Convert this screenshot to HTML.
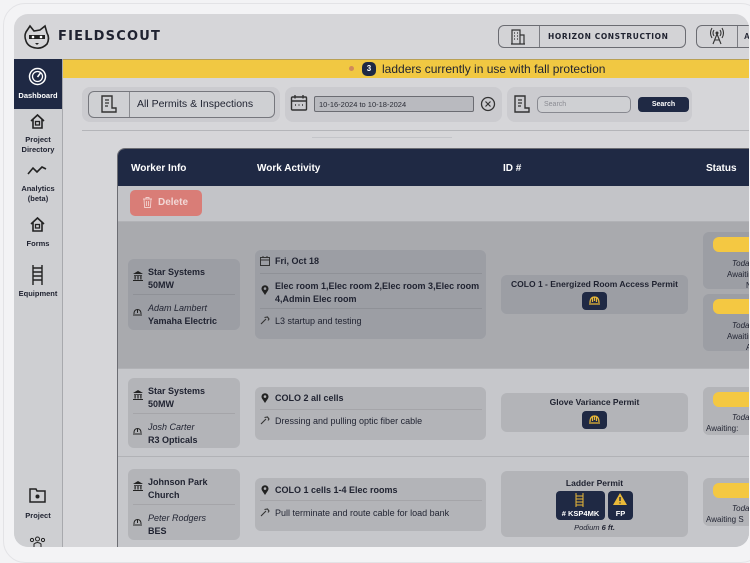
<!DOCTYPE html>
<html><head><meta charset="utf-8"><style>
*{box-sizing:border-box;margin:0;padding:0}
body{width:750px;height:548px;overflow:hidden;background:#f3f3f5;font-family:"Liberation Sans",sans-serif;color:#1f2230;position:relative}
.a{position:absolute}
.b{font-weight:bold}
#clip{position:absolute;left:0;top:0;width:750px;height:548px;clip-path:inset(14px 1px 1px 14px round 14px);overflow:hidden}
.frame{left:14px;top:14px;width:760px;height:560px;background:#d6d6d9}
.card{position:absolute;border-radius:6px}
.sep{border-top:1px solid rgba(0,0,0,.08)}
.t{font-size:9px;font-weight:bold}
.navbtn{background:#1f2944;border-radius:4px}
.yel{background:#f4c842;border-radius:6px}
</style></head><body>
<div class="a" style="left:3px;top:3px;width:760px;height:560px;border:1.5px solid #e3e3e6;border-radius:22px"></div>
<div id="clip">
<div class="a frame"></div>
<svg class="a" style="left:22px;top:24px" width="30" height="26" viewBox="0 0 30 26"><path d="M4 8 L8 2 L12 7 L18 6 L23 2 L25 9 Q28 14 25 20 Q20 25 14 24 Q6 23 4 17 Q2 12 4 8Z" fill="#d6d6d9" stroke="#222" stroke-width="1.6"/><rect x="7" y="11" width="16" height="4" fill="#222"/><circle cx="11" cy="13" r="1.3" fill="#fff"/><circle cx="19" cy="13" r="1.3" fill="#fff"/><path d="M13 19 L17 19 L15 21Z" fill="#222"/></svg>
<div class="a b" style="left:58px;top:29px;font-size:13px;letter-spacing:1.2px;font-family:'DejaVu Sans',sans-serif;font-weight:bold">FIELDSCOUT</div>
<div class="a" style="left:498px;top:25px;width:188px;height:23px;border:1.5px solid #6b6c72;border-radius:6px;background:#d3d3d6"></div>
<div class="a" style="left:539px;top:26px;width:1px;height:21px;background:#7b7c82"></div>
<svg class="a" style="left:510px;top:28px" width="16" height="17" viewBox="0 0 16 17"><path d="M2 16V2H10V16M10 7H14V16M1 16H15M4 5h1M7 5h1M4 8h1M7 8h1M4 11h1M7 11h1" stroke="#333" stroke-width="1.2" fill="none"/></svg>
<div class="a b" style="left:548px;top:32px;font-size:7.5px;letter-spacing:0.6px;font-family:'DejaVu Sans',sans-serif">HORIZON CONSTRUCTION</div>
<div class="a" style="left:696px;top:25px;width:70px;height:23px;border:1.5px solid #6b6c72;border-radius:6px;background:#d3d3d6"></div>
<div class="a" style="left:737px;top:26px;width:1px;height:21px;background:#7b7c82"></div>
<svg class="a" style="left:708px;top:27px" width="18" height="18" viewBox="0 0 18 18"><circle cx="9" cy="6" r="1.5" fill="#333"/><path d="M6 3Q4 6 6 9M12 3Q14 6 12 9M4 1Q1 6 4 11M14 1Q17 6 14 11M9 7L5 17M9 7L13 17M6.5 13H11.5" stroke="#333" stroke-width="1.1" fill="none"/></svg>
<div class="a b" style="left:744px;top:32px;font-size:8px">A</div>
<div class="a" style="left:63px;top:59px;width:700px;height:19px;background:#f1c842;border-top:1px solid #b9a054"></div>
<div class="a" style="left:349px;top:66px;width:5px;height:5px;border-radius:50%;background:#d08a5a"></div>
<div class="a" style="left:362px;top:62px;width:14px;height:14px;border-radius:5px;background:#1f2944;color:#fff;font-size:8px;font-weight:bold;text-align:center;line-height:14px">3</div>
<div class="a" style="left:382px;top:62px;font-size:12px;font-weight:500">ladders currently in use with fall protection</div>
<div class="a" style="left:14px;top:59px;width:49px;height:500px;background:#cecfd2;border-right:1px solid #a8a9ad"></div>
<div class="a" style="left:14px;top:59px;width:48px;height:50px;background:#1f2944"></div>
<svg class="a" style="left:28px;top:67px" width="19" height="19" viewBox="0 0 19 19"><circle cx="9.5" cy="9.5" r="8" stroke="#fff" stroke-width="1.5" fill="none"/><circle cx="9.5" cy="9.5" r="5" stroke="#fff" stroke-width="1.3" fill="none"/><path d="M9.5 10L12.5 6" stroke="#fff" stroke-width="1.5"/></svg>
<div class="a b" style="left:14px;top:91px;width:48px;text-align:center;font-size:7.5px;color:#fff">Dashboard</div>
<svg class="a" style="left:29px;top:113px" width="17" height="17" viewBox="0 0 17 17"><path d="M2 8L8.5 2L15 8M4 6.5V15H13V6.5" stroke="#222" stroke-width="1.6" fill="none"/><rect x="6.5" y="8.5" width="4" height="3.5" stroke="#222" stroke-width="1.3" fill="none"/></svg>
<div class="a b" style="left:14px;top:135px;width:48px;text-align:center;font-size:7.5px;line-height:10px">Project<br>Directory</div>
<svg class="a" style="left:27px;top:164px" width="20" height="12" viewBox="0 0 20 12"><path d="M1 10L6 4L10 8L15 3L19 5" stroke="#222" stroke-width="1.6" fill="none"/></svg>
<div class="a b" style="left:14px;top:184px;width:48px;text-align:center;font-size:7.5px;line-height:10px">Analytics<br>(beta)</div>
<svg class="a" style="left:29px;top:216px" width="17" height="17" viewBox="0 0 17 17"><path d="M2 8L8.5 2L15 8M4 6.5V15H13V6.5" stroke="#222" stroke-width="1.6" fill="none"/><rect x="6.5" y="8.5" width="4" height="3.5" stroke="#222" stroke-width="1.3" fill="none"/></svg>
<div class="a b" style="left:14px;top:239px;width:48px;text-align:center;font-size:7.5px">Forms</div>
<svg class="a" style="left:31px;top:265px" width="13" height="20" viewBox="0 0 13 20"><path d="M2 0V20M11 0V20M2 3H11M2 7H11M2 11H11M2 15H11" stroke="#222" stroke-width="1.4"/></svg>
<div class="a b" style="left:14px;top:289px;width:48px;text-align:center;font-size:7.5px">Equipment</div>
<svg class="a" style="left:29px;top:488px" width="17" height="15" viewBox="0 0 17 15"><path d="M1 1H7L8 3H16V14H1Z" stroke="#222" stroke-width="1.5" fill="none"/><circle cx="8.5" cy="8.5" r="2" fill="#222"/></svg>
<div class="a b" style="left:14px;top:511px;width:48px;text-align:center;font-size:7.5px">Project</div>
<svg class="a" style="left:28px;top:536px" width="19" height="12" viewBox="0 0 19 12"><circle cx="9.5" cy="3" r="2" stroke="#222" fill="none"/><circle cx="4" cy="4" r="1.6" stroke="#222" fill="none"/><circle cx="15" cy="4" r="1.6" stroke="#222" fill="none"/><path d="M6 12V8Q9.5 5 13 8V12" stroke="#222" fill="none"/></svg>
<div class="a" style="left:82px;top:87px;width:198px;height:35px;background:#cbcbcf;border-radius:8px"></div>
<div class="a" style="left:88px;top:91px;width:187px;height:27px;border:1.5px solid #76777d;border-radius:6px;background:#cfd0d3"></div>
<div class="a" style="left:129px;top:92px;width:1px;height:25px;background:#8a8b90"></div>
<svg class="a" style="left:100px;top:95px" width="18" height="19" viewBox="0 0 18 19"><path d="M2 1H12V13H16V17H2Z" stroke="#333" stroke-width="1.4" fill="none"/><path d="M5 5H9M5 8H9M5 11H8" stroke="#333" stroke-width="1.3"/></svg>
<div class="a" style="left:137px;top:98px;font-size:10.5px;font-weight:500">All Permits &amp; Inspections</div>
<div class="a" style="left:285px;top:87px;width:217px;height:35px;background:#cbcbcf;border-radius:8px"></div>
<svg class="a" style="left:290px;top:94px" width="18" height="18" viewBox="0 0 18 18"><rect x="1.5" y="3" width="15" height="13" rx="1" stroke="#333" stroke-width="1.4" fill="none"/><path d="M1.5 7H16.5M5 1V4.5M13 1V4.5M5 11h1M8.5 11h1M12 11h1" stroke="#333" stroke-width="1.4"/></svg>
<div class="a" style="left:314px;top:96px;width:160px;height:16px;border:1.2px solid #6b6c72;border-radius:2px;background:#b9babf;font-size:7.5px;padding:3px 4px;color:#2a2c36">10-16-2024 to 10-18-2024</div>
<svg class="a" style="left:480px;top:96px" width="16" height="16" viewBox="0 0 16 16"><circle cx="8" cy="8" r="6.5" stroke="#333" stroke-width="1.3" fill="none"/><path d="M5.5 5.5L10.5 10.5M10.5 5.5L5.5 10.5" stroke="#333" stroke-width="1.2"/></svg>
<div class="a" style="left:507px;top:87px;width:185px;height:35px;background:#cbcbcf;border-radius:8px"></div>
<svg class="a" style="left:513px;top:95px" width="18" height="19" viewBox="0 0 18 19"><path d="M2 1H12V13H16V17H2Z" stroke="#333" stroke-width="1.4" fill="none"/><path d="M5 5H9M5 8H9M5 11H8" stroke="#333" stroke-width="1.3"/></svg>
<div class="a" style="left:537px;top:96px;width:94px;height:17px;border:1.2px solid #888990;border-radius:5px;background:#cfd0d3;font-size:7px;padding:3.5px 6px;color:#8a8b92">Search</div>
<div class="a b" style="left:638px;top:97px;width:51px;height:15px;border-radius:4px;background:#1f2944;color:#fff;font-size:7px;text-align:center;line-height:15px">Search</div>
<div class="a" style="left:82px;top:130px;width:680px;height:1px;background:#b4b5b9"></div>
<div class="a" style="left:312px;top:137px;width:140px;height:1px;background:#c4c5c9"></div>
<div class="a" style="left:117px;top:148px;width:650px;height:410px;border:1.5px solid #6c6d73;border-radius:8px;overflow:hidden;background:#c6c7cb">
 <div class="a" style="left:0;top:0;width:650px;height:37px;background:#1f2944"></div>
 <div class="a" style="left:0;top:37px;width:650px;height:36px;background:#c3c4c8;border-bottom:1px solid #b1b2b6"></div>
 <div class="a" style="left:0;top:73px;width:650px;height:146px;background:#a9aaae"></div>
 <div class="a" style="left:0;top:219px;width:650px;height:88px;background:#c6c7cb;border-top:1px solid #b1b2b6"></div>
 <div class="a" style="left:0;top:307px;width:650px;height:110px;background:#c6c7cb;border-top:1px solid #b1b2b6"></div>
</div>
<div class="a b" style="left:131px;top:163px;font-size:10px;color:#fff">Worker Info</div>
<div class="a b" style="left:257px;top:163px;font-size:10px;color:#fff">Work Activity</div>
<div class="a b" style="left:503px;top:163px;font-size:10px;color:#fff">ID #</div>
<div class="a b" style="left:706px;top:163px;font-size:10px;color:#fff">Status</div>
<div class="a b" style="left:130px;top:190px;width:72px;height:26px;background:#d97d77;border-radius:5px;color:#f2d8d6;font-size:10px;line-height:26px;padding-left:28px">Delete</div>
<svg class="a" style="left:143px;top:197px" width="9" height="11" viewBox="0 0 9 11"><path d="M0 2H9M3 2V0.5H6V2M1 2L1.6 10.5H7.4L8 2M3.5 4V9M5.5 4V9" stroke="#f2d0cd" stroke-width="0.9" fill="none"/></svg>
<div class="card" style="left:128px;top:259px;width:112px;height:71px;background:#9c9ea4"></div>
<div class="card" style="left:255px;top:250px;width:231px;height:89px;background:#9c9ea4"></div>
<div class="card" style="left:501px;top:275px;width:187px;height:39px;background:#9c9ea4"></div>
<div class="card" style="left:703px;top:232px;width:60px;height:57px;background:#9c9ea4"></div>
<div class="card" style="left:703px;top:294px;width:60px;height:57px;background:#9c9ea4"></div>
<div class="card" style="left:128px;top:378px;width:112px;height:70px;background:#b3b4b8"></div>
<div class="card" style="left:255px;top:387px;width:231px;height:53px;background:#b3b4b8"></div>
<div class="card" style="left:501px;top:393px;width:187px;height:39px;background:#b3b4b8"></div>
<div class="card" style="left:703px;top:387px;width:60px;height:48px;background:#b3b4b8"></div>
<div class="card" style="left:128px;top:469px;width:112px;height:71px;background:#b3b4b8"></div>
<div class="card" style="left:255px;top:478px;width:231px;height:53px;background:#b3b4b8"></div>
<div class="card" style="left:501px;top:471px;width:187px;height:66px;background:#b3b4b8"></div>
<div class="card" style="left:703px;top:478px;width:60px;height:48px;background:#b3b4b8"></div>
<div class="a t" style="left:148px;top:266px;line-height:12.5px">Star Systems<br>50MW</div>
<div class="a sep" style="left:133px;top:294px;width:102px"></div>
<div class="a" style="left:148px;top:302px;font-size:9px;line-height:12.5px"><i>Adam Lambert</i><br><b>Yamaha Electric</b></div>
<div class="a t" style="left:148px;top:385px;line-height:12.5px">Star Systems<br>50MW</div>
<div class="a sep" style="left:133px;top:413px;width:102px"></div>
<div class="a" style="left:148px;top:421px;font-size:9px;line-height:12.5px"><i>Josh Carter</i><br><b>R3 Opticals</b></div>
<div class="a t" style="left:148px;top:476px;line-height:12.5px">Johnson Park<br>Church</div>
<div class="a sep" style="left:133px;top:504px;width:102px"></div>
<div class="a" style="left:148px;top:512px;font-size:9px;line-height:12.5px"><i>Peter Rodgers</i><br><b>BES</b></div>
<svg class="a" style="left:133px;top:271px" width="10" height="10" viewBox="0 0 10 10"><path d="M0 3L5 0L10 3ZM1 4H9V4.8H1ZM1.5 5H2.7V8.5H1.5ZM4.4 5H5.6V8.5H4.4ZM7.3 5H8.5V8.5H7.3ZM0 9H10V10H0Z" fill="#222"/></svg>
<svg class="a" style="left:133px;top:390px" width="10" height="10" viewBox="0 0 10 10"><path d="M0 3L5 0L10 3ZM1 4H9V4.8H1ZM1.5 5H2.7V8.5H1.5ZM4.4 5H5.6V8.5H4.4ZM7.3 5H8.5V8.5H7.3ZM0 9H10V10H0Z" fill="#222"/></svg>
<svg class="a" style="left:133px;top:481px" width="10" height="10" viewBox="0 0 10 10"><path d="M0 3L5 0L10 3ZM1 4H9V4.8H1ZM1.5 5H2.7V8.5H1.5ZM4.4 5H5.6V8.5H4.4ZM7.3 5H8.5V8.5H7.3ZM0 9H10V10H0Z" fill="#222"/></svg>
<svg class="a" style="left:133px;top:308px" width="9" height="8" viewBox="0 0 9 8"><path d="M1 6Q1 1.5 4.5 1.5Q8 1.5 8 6M0 7H9M4.5 1.5V5" stroke="#222" stroke-width="1" fill="none"/></svg>
<svg class="a" style="left:133px;top:427px" width="9" height="8" viewBox="0 0 9 8"><path d="M1 6Q1 1.5 4.5 1.5Q8 1.5 8 6M0 7H9M4.5 1.5V5" stroke="#222" stroke-width="1" fill="none"/></svg>
<svg class="a" style="left:133px;top:518px" width="9" height="8" viewBox="0 0 9 8"><path d="M1 6Q1 1.5 4.5 1.5Q8 1.5 8 6M0 7H9M4.5 1.5V5" stroke="#222" stroke-width="1" fill="none"/></svg>
<svg class="a" style="left:260px;top:256px" width="10" height="10" viewBox="0 0 10 10"><rect x="0.5" y="1.5" width="9" height="8" stroke="#333" fill="none"/><path d="M0.5 4H9.5M3 0V2M7 0V2" stroke="#333"/></svg>
<div class="a t" style="left:275px;top:256px">Fri, Oct 18</div>
<div class="a sep" style="left:260px;top:273px;width:222px"></div>
<div class="a t" style="left:275px;top:280px;line-height:13px">Elec room 1,Elec room 2,Elec room 3,Elec room<br>4,Admin Elec room</div>
<div class="a sep" style="left:260px;top:308px;width:222px"></div>
<div class="a" style="left:275px;top:316px;font-size:9px">L3 startup and testing</div>
<div class="a t" style="left:275px;top:393px">COLO 2 all cells</div>
<div class="a sep" style="left:260px;top:409px;width:222px"></div>
<div class="a" style="left:275px;top:416px;font-size:9px">Dressing and pulling optic fiber cable</div>
<div class="a t" style="left:275px;top:485px">COLO 1 cells 1-4 Elec rooms</div>
<div class="a sep" style="left:260px;top:500px;width:222px"></div>
<div class="a" style="left:275px;top:508px;font-size:9px">Pull terminate and route cable for load bank</div>
<svg class="a" style="left:261px;top:285px" width="8" height="10" viewBox="0 0 8 10"><path d="M4 10L1 5.5A3.5 3.5 0 1 1 7 5.5Z" fill="#222"/><circle cx="4" cy="3.6" r="1.3" fill="#9c9ea4"/></svg>
<svg class="a" style="left:261px;top:393px" width="8" height="10" viewBox="0 0 8 10"><path d="M4 10L1 5.5A3.5 3.5 0 1 1 7 5.5Z" fill="#222"/><circle cx="4" cy="3.6" r="1.3" fill="#b3b4b8"/></svg>
<svg class="a" style="left:261px;top:485px" width="8" height="10" viewBox="0 0 8 10"><path d="M4 10L1 5.5A3.5 3.5 0 1 1 7 5.5Z" fill="#222"/><circle cx="4" cy="3.6" r="1.3" fill="#b3b4b8"/></svg>
<svg class="a" style="left:260px;top:316px" width="10" height="9" viewBox="0 0 10 9"><path d="M1 8L6 3M4.5 1.5L7.5 1L9 3L8 4.5" stroke="#333" stroke-width="1.1" fill="none"/></svg>
<svg class="a" style="left:260px;top:416px" width="10" height="9" viewBox="0 0 10 9"><path d="M1 8L6 3M4.5 1.5L7.5 1L9 3L8 4.5" stroke="#333" stroke-width="1.1" fill="none"/></svg>
<svg class="a" style="left:260px;top:508px" width="10" height="9" viewBox="0 0 10 9"><path d="M1 8L6 3M4.5 1.5L7.5 1L9 3L8 4.5" stroke="#333" stroke-width="1.1" fill="none"/></svg>
<div class="a t" style="left:501px;top:279px;width:187px;text-align:center;font-size:8.5px">COLO 1 - Energized Room Access Permit</div>
<div class="a navbtn" style="left:582px;top:292px;width:25px;height:18px"></div>
<svg class="a" style="left:588px;top:295px" width="13" height="11" viewBox="0 0 13 11"><path d="M2 8Q2 2 6.5 2Q11 2 11 8M1 9H12M6.5 2V6M4.5 3V7M8.5 3V7" stroke="#e8b838" stroke-width="1.2" fill="none"/></svg>
<div class="a t" style="left:501px;top:397px;width:187px;text-align:center;font-size:8.5px">Glove Variance Permit</div>
<div class="a navbtn" style="left:582px;top:411px;width:25px;height:18px"></div>
<svg class="a" style="left:588px;top:414px" width="13" height="11" viewBox="0 0 13 11"><path d="M2 8Q2 2 6.5 2Q11 2 11 8M1 9H12M6.5 2V6M4.5 3V7M8.5 3V7" stroke="#e8b838" stroke-width="1.2" fill="none"/></svg>
<div class="a t" style="left:501px;top:478px;width:187px;text-align:center;font-size:8.5px">Ladder Permit</div>
<div class="a navbtn" style="left:556px;top:491px;width:49px;height:29px"></div>
<svg class="a" style="left:575px;top:493px" width="9" height="14" viewBox="0 0 9 14"><path d="M1 0V14M8 0V14M1 3H8M1 6H8M1 9H8M1 12H8" stroke="#e8b838" stroke-width="1"/></svg>
<div class="a b" style="left:556px;top:509px;width:49px;text-align:center;font-size:7.5px;color:#fff">#&nbsp;KSP4MK</div>
<div class="a navbtn" style="left:608px;top:491px;width:25px;height:29px"></div>
<svg class="a" style="left:613px;top:493px" width="14" height="12" viewBox="0 0 14 12"><path d="M7 0L14 12H0Z" fill="#e8b838"/><path d="M7 4V8M7 9.5V10.5" stroke="#1f2944" stroke-width="1.4"/></svg>
<div class="a b" style="left:608px;top:509px;width:25px;text-align:center;font-size:7.5px;color:#fff">FP</div>
<div class="a" style="left:501px;top:523px;width:187px;text-align:center;font-size:7.5px;font-style:italic">Podium <b>6 ft.</b></div>
<div class="a yel" style="left:713px;top:237px;width:50px;height:15px"></div>
<div class="a" style="left:706px;top:258px;font-size:8px;line-height:11px;white-space:nowrap"><i style="padding-left:26px">Today</i><br><span style="padding-left:21px">Awaiting</span><br><span style="padding-left:40px">N</span></div>
<div class="a yel" style="left:713px;top:299px;width:50px;height:15px"></div>
<div class="a" style="left:706px;top:320px;font-size:8px;line-height:11px;white-space:nowrap"><i style="padding-left:26px">Today</i><br><span style="padding-left:21px">Awaiting</span><br><span style="padding-left:40px">A</span></div>
<div class="a yel" style="left:713px;top:392px;width:50px;height:15px"></div>
<div class="a" style="left:706px;top:412px;font-size:8px;line-height:11px;white-space:nowrap"><i style="padding-left:26px">Today</i><br>Awaiting:</div>
<div class="a yel" style="left:713px;top:483px;width:50px;height:15px"></div>
<div class="a" style="left:706px;top:503px;font-size:8px;line-height:11px;white-space:nowrap"><i style="padding-left:26px">Today</i><br>Awaiting S</div>
</div>
</body></html>
